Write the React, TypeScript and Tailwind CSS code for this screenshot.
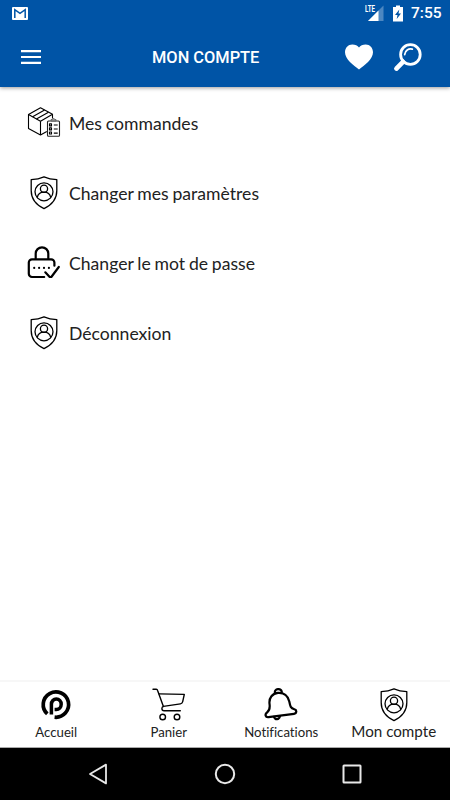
import type { ReactNode } from 'react';

type IconProps = { className?: string };

function ShieldUserIcon({ className }: IconProps) {
  return (
    <svg width="34" height="34" viewBox="0 0 34 34" fill="none" stroke="#000" strokeWidth="1.3" className={className}>
      <path d="M17 .8C13.2 2.5 8.8 3.4 4.2 3.6v11.2c0 7.6 4.600 13.900 12.800 17.900 8.200-4 12.800-10.300 12.800-17.900V3.600C25.200 3.400 20.800 2.500 17 .8Z" strokeLinejoin="round" />
      <circle cx="17" cy="15.800" r="9" />
      <circle cx="17" cy="12.700" r="3.600" />
      <path d="M10.200 21.600c.7-3.300 3.300-5.400 6.800-5.400s6.100 2.100 6.800 5.400" />
    </svg>
  );
}

function OrdersIcon() {
  return (
    <svg width="34" height="34" viewBox="0 0 34 34" fill="none" stroke="#000" strokeWidth="1.1" strokeLinejoin="round">
      <path d="M13.500 1.800 25.500 8.300 13.500 15.200 1.500 8.600Z" />
      <path d="M1.500 8.600v13.800l12 6.600V15.200M25.500 8.300v4.200M13.500 29l6.300-3.600" />
      <path d="M5.600 10.800 17.600 4.100M9.400 13 21.500 6.200" />
      <rect x="20.500" y="15" width="12" height="15.200" rx="1" stroke="#222" fill="#fff" />
      <path d="M24 15v-1.500h1.200c.2-1.300 2.400-1.300 2.600 0H29V15Z" fill="#999" stroke="#555" strokeWidth=".8" />
      <path d="M22.500 17.900h2v2h-2zM22.500 21.900h2v2h-2zM22.500 26h2v2h-2zM26.800 19h3.900M26.800 23h3.900M26.800 27.100h3.900" />
    </svg>
  );
}

function LockCheckIcon() {
  return (
    <svg width="34" height="34" viewBox="0 0 34 34" fill="none" stroke="#000" strokeWidth="2.200" strokeLinecap="round" strokeLinejoin="round">
      <path d="M8.700 12.500V7.600a6.300 6.300 0 0 1 12.600 0v4.900" />
      <path d="M17.200 31H5a3.200 3.200 0 0 1-3.200-3.200V16.500A3.200 3.200 0 0 1 5 13.300h19.200a3.200 3.200 0 0 1 3.200 3.200v3.200" />
      <path d="m18.300 26.300 4.400 4.700h1.600l7.500-10" />
      <path d="M7.200 21.900h.01M12.100 21.900h.01M17 21.900h.01M21.900 21.900h.01" />
    </svg>
  );
}

function HomeLogo() {
  return (
    <svg width="34" height="34" viewBox="0 0 34 34" fill="none" stroke="#000" strokeWidth="3.700">
      <path d="M8.300 25.900A12.700 12.700 0 1 1 15.600 29.200" />
      <path d="M12.400 26.500V16.200a4.900 5.300 0 1 1 4.900 5.300h-1.700" strokeWidth="3.500" />
    </svg>
  );
}

function CartIcon() {
  return (
    <svg width="34" height="34" viewBox="0 0 34 34" fill="none" stroke="#000" strokeWidth="1.400" strokeLinecap="round" strokeLinejoin="round">
      <path d="M1 1.300h3.300c.7 0 1.100.4 1.300 1.100l5.800 16.100" />
      <path d="M7.200 5.900 32.300 6.400 30.700 13.700c-.3 1.500-1 2-2.300 2.200l-17 2.500c-1.100.3-1.500 1-1.500 2 0 1.300.8 2.300 2.200 2.300h16.200" />
      <circle cx="10.700" cy="29" r="2.800" />
      <circle cx="25" cy="29" r="2.800" />
    </svg>
  );
}

function BellIcon() {
  return (
    <svg width="34" height="34" viewBox="0 0 34 34" fill="none" stroke="#000" strokeWidth="2.200" strokeLinecap="round" strokeLinejoin="round">
      <path d="M11 4.900c-.6-2 .8-3.500 2.900-3.700s3.500.7 3.900 2.700" />
      <path d="M5.600 16.500C4.500 9.600 8.800 5.300 14 4.900c5.700-.4 10.100 3 11.300 8.700.9 4.500 1.200 6.700 5 7.600 2.900.7 2.400 4.200-.3 4.600L4.500 29.200c-3.200.4-3.900-3.100-1.500-4.700 3-2 3-4.400 2.600-8Z" />
      <path d="M10 28.800c1.200 3.400 5 3.200 6-.8" />
    </svg>
  );
}

const menuItems: { label: string; icon: ReactNode }[] = [
  { label: 'Mes commandes', icon: <OrdersIcon /> },
  { label: 'Changer mes paramètres', icon: <ShieldUserIcon /> },
  { label: 'Changer le mot de passe', icon: <LockCheckIcon /> },
  { label: 'Déconnexion', icon: <ShieldUserIcon /> },
];

const tabs: { label: string; icon: ReactNode; active?: boolean }[] = [
  { label: 'Accueil', icon: <HomeLogo /> },
  { label: 'Panier', icon: <CartIcon /> },
  { label: 'Notifications', icon: <BellIcon /> },
  { label: 'Mon compte', icon: <ShieldUserIcon />, active: true },
];

function StatusBar() {
  return (
    <div className="flex h-[27px] items-center pl-3 pr-[9px]">
      <svg width="16" height="13" viewBox="0 0 16 13">
        <rect width="16" height="13" rx="1" fill="#fff" />
        <path d="M2.800 11V2.600L8 6.300l5.200-3.700V11" fill="none" stroke="#0054a6" strokeWidth="1.500" />
      </svg>
      <div className="relative ml-auto h-[17px] w-[20px]">
        <svg width="20" height="17" viewBox="0 0 20 17">
          <path d="M19.500.5V16H4Z" fill="#4d87c1" />
          <path d="M14.500 5.500V16H4Z" fill="#fff" />
        </svg>
        <span className="absolute left-px top-0 origin-left bg-[#0054a6] pr-px text-[9px] font-bold leading-[8px] [transform:scaleX(.68)]">LTE</span>
      </div>
      <svg width="10" height="17" viewBox="0 0 10 17" className="ml-[9px] mr-[8px]">
        <path d="M3 .5h4V2h3v14.500H0V2h3Z" fill="#fff" />
        <path d="M6.300 4.500 2 10h2.500l-.8 4L8 8.500H5.500Z" fill="#0054a6" />
      </svg>
      <span className="w-[30px] whitespace-nowrap pt-px text-[15.500px] font-medium leading-none">7:55</span>
    </div>
  );
}

function Header() {
  return (
    <header className="relative z-10 h-[87px] shrink-0 bg-[#0054a6] font-[Roboto,sans-serif] text-white shadow-[0_1px_4px_rgba(0,0,0,0.4)]">
      <StatusBar />
      <div className="flex h-[60px] items-center pl-[21px] pr-7">
        <svg width="20" height="14" viewBox="0 0 20 14" fill="#fff">
          <path d="M0 0h20v2.200H0zM0 5.900h20v2.200H0zM0 11.800h20V14H0z" />
        </svg>
        <h1 className="ml-[111px] pt-0.5 text-[16.400px] font-medium leading-none">MON COMPTE</h1>
        <svg width="28" height="26" viewBox="0 0 28 26" className="mb-px ml-auto" fill="#fff">
          <path d="M14 25.500C8.500 21.500 0 15.200 0 8.300 0 3.700 3.200.5 7.300.5c2.900 0 5.400 1 6.700 3 1.300-2 3.800-3 6.700-3 4.100 0 7.300 3.200 7.300 7.800 0 6.900-8.500 13.200-14 17.200Z" />
        </svg>
        <svg width="29" height="29" viewBox="0 0 29 29" className="ml-5" fill="none" stroke="#fff" strokeLinecap="round">
          <circle cx="17.400" cy="11.500" r="9.800" strokeWidth="2.800" />
          <path d="M11.700 11.500a5.900 5.900 0 0 1 7.600-5.300" strokeWidth="1.800" />
          <path d="M10 18.800 3.400 25.600" strokeWidth="4.600" />
        </svg>
      </div>
    </header>
  );
}

function TabBar() {
  return (
    <nav className="grid h-[68px] shrink-0 grid-cols-4 border-t-2 border-b border-t-[#f7f7f7] border-b-[#aaa] bg-white">
      {tabs.map((tab) => (
        <div key={tab.label} className="flex flex-col items-center pt-1.5">
          {tab.icon}
          <span className={tab.active ? 'text-[15.200px] leading-[18px]' : 'pt-px text-[13.200px] leading-[19px]'}>
            {tab.label}
          </span>
        </div>
      ))}
    </nav>
  );
}

function AndroidNav() {
  return (
    <div className="grid h-[52px] shrink-0 grid-cols-3 items-center bg-black px-[35px]">
      <svg width="20" height="22" viewBox="0 0 20 22" className="mx-auto" fill="none" stroke="#e8e8e8" strokeWidth="1.800" strokeLinejoin="round">
        <path d="M18 1.600v18.800L2 11Z" />
      </svg>
      <svg width="22" height="22" viewBox="0 0 22 22" className="mx-auto" fill="none" stroke="#e8e8e8" strokeWidth="2">
        <circle cx="11" cy="11" r="9.200" />
      </svg>
      <svg width="20" height="20" viewBox="0 0 20 20" className="mx-auto" fill="none" stroke="#e8e8e8" strokeWidth="2">
        <rect x="1.500" y="1.500" width="17" height="17" rx=".5" />
      </svg>
    </div>
  );
}

export default function App() {
  return (
    <div className="flex h-[800px] w-[450px] flex-col bg-white font-[Lato,sans-serif] text-[#222] [font-variant-ligatures:none]">
      <Header />
      <main className="flex-1 pt-px">
        {menuItems.map((item) => (
          <div key={item.label} className="flex h-[70px] items-center gap-2 pl-[27px]">
            {item.icon}
            <span className="pt-0.5 text-[17.600px] [word-spacing:-0.7px]">{item.label}</span>
          </div>
        ))}
      </main>
      <TabBar />
      <AndroidNav />
    </div>
  );
}
